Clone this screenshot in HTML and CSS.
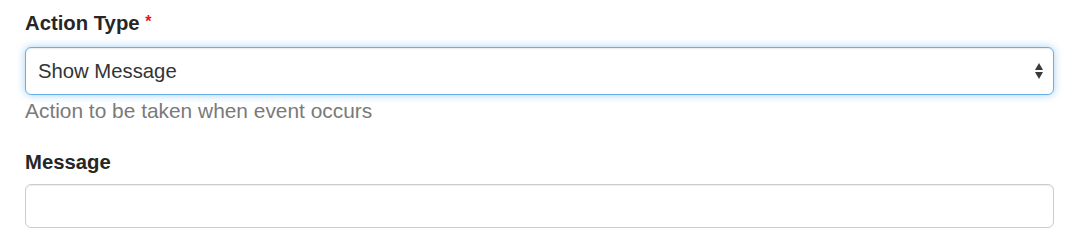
FILE: index.html
```html
<!DOCTYPE html>
<html lang="en">
<head>
<meta charset="utf-8">
<title>Action form</title>
<link rel="stylesheet" href="styles.css">
</head>
<body>
<form class="form">
  <div class="form-group">
    <label class="control-label">Action Type <span class="required">*</span></label>
    <div class="select focused">
      <span class="select-value">Show Message</span>
      <svg class="select-arrows" width="10" height="18" viewBox="0 0 10 18" aria-hidden="true">
        <polygon points="5,1 9,8 1,8" fill="#3a3a3a"/>
        <polygon points="1,10 9,10 5,17" fill="#3a3a3a"/>
      </svg>
    </div>
    <p class="help-block">Action to be taken when event occurs</p>
  </div>
  <div class="form-group">
    <label class="control-label">Message</label>
    <div class="input"></div>
  </div>
</form>
</body>
</html>
```
FILE: styles.css
```css
html, body {
  margin: 0;
  padding: 0;
  background: #ffffff;
}

body {
  font-family: "Liberation Sans", Arial, Helvetica, sans-serif;
  font-size: 20px;
  color: #333333;
}

.form {
  padding: 8px 29px 0 25px;
}

.form-group {
  display: flex;
  flex-direction: column;
}

.form-group + .form-group {
  margin-top: 25px;
}

.control-label {
  font-weight: bold;
  font-size: 20.3px;
  line-height: 28px;
  color: #262626;
  margin-bottom: 10px;
}

.form-group + .form-group .control-label {
  margin-bottom: 8px;
}

.required {
  color: #e8141b;
  font-size: 16px;
  vertical-align: 3px;
}

.select {
  height: 48px;
  box-sizing: border-box;
  border: 1px solid #66afe9;
  border-radius: 6px;
  display: flex;
  align-items: center;
  justify-content: space-between;
  padding: 0 9px 0 12px;
  background: #ffffff;
}

.select.focused {
  box-shadow: inset 0 1px 1px rgba(0, 0, 0, 0.075), 0 0 8px rgba(102, 175, 233, 0.6);
}

.select-value {
  color: #333333;
  font-size: 20.3px;
}

.select-arrows {
  display: block;
}

.help-block {
  margin: 4px 0 0 0;
  font-size: 20.9px;
  line-height: 24px;
  color: #7a7a7a;
}

.input {
  height: 44px;
  box-sizing: border-box;
  border: 1px solid #cccccc;
  border-radius: 6px;
  box-shadow: inset 0 1px 1px rgba(0, 0, 0, 0.075);
  background: #ffffff;
}
```
